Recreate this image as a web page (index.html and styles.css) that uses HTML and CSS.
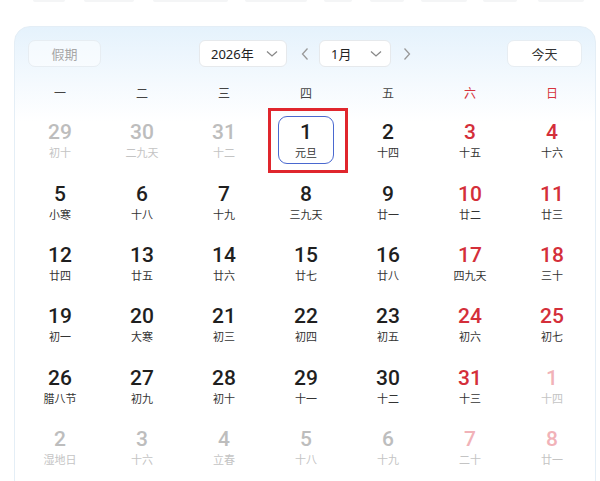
FILE: index.html
```html
<!DOCTYPE html>
<html lang="zh">
<head>
<meta charset="utf-8">
<link rel="stylesheet" href="styles.css">
</head>
<body>
<div class="page">
  <div class="topstrip">
    <span class="ts" style="width:32px;margin-left:33px"></span>
    <span class="ts" style="width:50px;margin-left:19px"></span>
    <span class="ts" style="width:75px;margin-left:19px"></span>
    <span class="ts" style="width:62px;margin-left:17px"></span>
    <span class="ts" style="width:28px;margin-left:17px"></span>
    <span class="ts" style="width:34px;margin-left:18px"></span>
    <span class="ts" style="width:46px;margin-left:17px"></span>
    <span class="ts" style="width:34px;margin-left:16px"></span>
    <span class="ts" style="width:46px;margin-left:21px"></span>
  </div>
  <div class="card">
    <div class="header">
      <button class="btn holiday">假期</button>
      <div class="nav">
        <div class="select year"><span>2026年</span>
          <svg class="chev" width="12" height="8" viewBox="0 0 12 8"><polyline points="1,1.5 6,6 11,1.5" fill="none" stroke="#888" stroke-width="1.3"/></svg>
        </div>
        <svg class="arrow" width="8" height="14" viewBox="0 0 8 14"><polyline points="6.5,1.5 1.5,7 6.5,12.5" fill="none" stroke="#999" stroke-width="1.3"/></svg>
        <div class="select month"><span>1月</span>
          <svg class="chev" width="12" height="8" viewBox="0 0 12 8"><polyline points="1,1.5 6,6 11,1.5" fill="none" stroke="#888" stroke-width="1.3"/></svg>
        </div>
        <svg class="arrow" width="8" height="14" viewBox="0 0 8 14"><polyline points="1.5,1.5 6.5,7 1.5,12.5" fill="none" stroke="#999" stroke-width="1.3"/></svg>
      </div>
      <button class="btn today">今天</button>
    </div>
    <div class="weekdays">
      <span>一</span><span>二</span><span>三</span><span>四</span><span>五</span><span class="we">六</span><span class="we">日</span>
    </div>
    <div class="grid">
      <div class="cell other"><b>29</b><i>初十</i></div>
      <div class="cell other"><b>30</b><i>二九天</i></div>
      <div class="cell other"><b>31</b><i>十二</i></div>
      <div class="cell sel"><div class="selbox"><b>1</b><i>元旦</i></div><div class="mark"></div></div>
      <div class="cell"><b>2</b><i>十四</i></div>
      <div class="cell red"><b>3</b><i>十五</i></div>
      <div class="cell red"><b>4</b><i>十六</i></div>

      <div class="cell"><b>5</b><i>小寒</i></div>
      <div class="cell"><b>6</b><i>十八</i></div>
      <div class="cell"><b>7</b><i>十九</i></div>
      <div class="cell"><b>8</b><i>三九天</i></div>
      <div class="cell"><b>9</b><i>廿一</i></div>
      <div class="cell red"><b>10</b><i>廿二</i></div>
      <div class="cell red"><b>11</b><i>廿三</i></div>

      <div class="cell"><b>12</b><i>廿四</i></div>
      <div class="cell"><b>13</b><i>廿五</i></div>
      <div class="cell"><b>14</b><i>廿六</i></div>
      <div class="cell"><b>15</b><i>廿七</i></div>
      <div class="cell"><b>16</b><i>廿八</i></div>
      <div class="cell red"><b>17</b><i>四九天</i></div>
      <div class="cell red"><b>18</b><i>三十</i></div>

      <div class="cell"><b>19</b><i>初一</i></div>
      <div class="cell"><b>20</b><i>大寒</i></div>
      <div class="cell"><b>21</b><i>初三</i></div>
      <div class="cell"><b>22</b><i>初四</i></div>
      <div class="cell"><b>23</b><i>初五</i></div>
      <div class="cell red"><b>24</b><i>初六</i></div>
      <div class="cell red"><b>25</b><i>初七</i></div>

      <div class="cell"><b>26</b><i>腊八节</i></div>
      <div class="cell"><b>27</b><i>初九</i></div>
      <div class="cell"><b>28</b><i>初十</i></div>
      <div class="cell"><b>29</b><i>十一</i></div>
      <div class="cell"><b>30</b><i>十二</i></div>
      <div class="cell red"><b>31</b><i>十三</i></div>
      <div class="cell other otherred"><b>1</b><i>十四</i></div>

      <div class="cell other"><b>2</b><i>湿地日</i></div>
      <div class="cell other"><b>3</b><i>十六</i></div>
      <div class="cell other"><b>4</b><i>立春</i></div>
      <div class="cell other"><b>5</b><i>十八</i></div>
      <div class="cell other"><b>6</b><i>十九</i></div>
      <div class="cell other otherred"><b>7</b><i>二十</i></div>
      <div class="cell other otherred"><b>8</b><i>廿一</i></div>
    </div>
  </div>
</div>
</body>
</html>
```

FILE: styles.css
```css
* { box-sizing: border-box; }
html, body { margin: 0; padding: 0; background: #fff; }
body {
  font-family: "Noto Sans", "Noto Sans CJK SC", sans-serif;
  color: #222;
  width: 600px;
  height: 481px;
  overflow: hidden;
}
.page { height: 481px; overflow: hidden; }
.topstrip { display: flex; height: 26px; align-items: flex-start; }
.ts {
  display: block;
  height: 2px;
  background: #f4f5f6;
  border-radius: 0 0 3px 3px;
}
.card {
  margin-left: 14px;
  width: 582px;
  height: 470px;
  border: 1px solid #e4eef6;
  border-radius: 16px;
  background: linear-gradient(180deg, #e5f2fc 0px, #f3f9fe 50px, #ffffff 95px);
  padding: 13px 3px 0 3px;
}
.header {
  display: flex;
  justify-content: space-between;
  align-items: center;
  padding: 0 10px 0 10px;
  height: 27px;
}
.btn {
  font-family: "Noto Sans CJK SC", sans-serif;
  font-size: 13px;
  height: 27px;
  border-radius: 7px;
  border: 1px solid #e7edf2;
  background: #ffffff;
  padding: 0;
  display: flex;
  align-items: center;
  justify-content: center;
}
.holiday { width: 73px; color: #a6a6a6; background: rgba(255,255,255,0.5); }
.today { width: 75px; color: #333; }
.nav { display: flex; align-items: center; margin-left: 2px; }
.select {
  display: flex;
  align-items: center;
  justify-content: space-between;
  height: 27px;
  background: #fff;
  border: 1px solid #e6e9ec;
  border-radius: 6px;
  font-family: "Noto Sans", "Noto Sans CJK SC", sans-serif;
  font-size: 13px;
  color: #222;
  padding: 0 8px 0 11px;
}
.year { width: 88px; }
.month { width: 72px; }
.chev { display: block; }
.arrow { display: block; margin: 0 10px 0 14px; }
.arrow:last-child { margin: 0 0 0 12px; }
.weekdays {
  display: grid;
  grid-template-columns: repeat(7, 82px);
  margin-top: 8px;
  height: 34px;
  align-items: center;
  padding-left: 1px;
}
.weekdays span {
  text-align: center;
  font-family: "Noto Sans CJK SC", sans-serif;
  font-size: 12px;
  color: #444;
}
.weekdays .we { color: #d6333d; }
.grid {
  display: grid;
  grid-template-columns: repeat(7, 82px);
  grid-auto-rows: 61.4px;
  padding-left: 1px;
}
.cell {
  position: relative;
  display: flex;
  flex-direction: column;
  align-items: center;
  justify-content: center;
  padding-top: 1px;
}
.cell b {
  display: block;
  font-family: Roboto, "Noto Sans", sans-serif;
  font-weight: 500;
  font-size: 21px;
  line-height: 23px;
  color: #1f1f1f;
}
.cell i {
  display: block;
  font-style: normal;
  font-family: "Noto Sans CJK SC", sans-serif;
  font-size: 11px;
  line-height: 14px;
  margin-top: 1px;
  color: #333;
}
.cell.red b { color: #d42f3a; }
.cell.other b { color: #bdbdbd; }
.cell.other i { color: #c4c4c4; }
.cell.otherred b { color: #f1b2b8; }
.selbox {
  width: 56px;
  height: 48px;
  border: 1.5px solid #4a68cf;
  border-radius: 9px;
  display: flex;
  flex-direction: column;
  align-items: center;
  justify-content: center;
}
.mark {
  position: absolute;
  left: 3px;
  top: -1px;
  width: 80px;
  height: 65px;
  border: 3px solid #e0262d;
}
```
